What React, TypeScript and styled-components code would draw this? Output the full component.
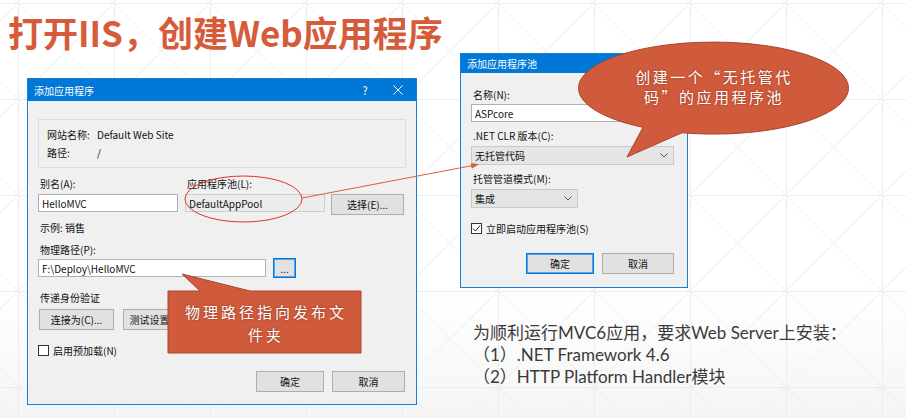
import styled, { createGlobalStyle } from "styled-components";

const GlobalStyle = createGlobalStyle`
  html, body {
    margin: 0;
    padding: 0;
  }
  body {
    background: #ffffff;
    font-family: "Noto Sans CJK SC", sans-serif;
  }
`;

const Slide = styled.div`
  position: relative;
  width: 906px;
  height: 418px;
  overflow: hidden;
  background: linear-gradient(to bottom, #ffffff 0, #ffffff 290px, #f5f5f5 418px);
`;

const Backdrop = styled.svg`
  position: absolute;
  left: 0;
  top: 0;
  z-index: 0;
`;

const Overlay = styled.svg`
  position: absolute;
  left: 0;
  top: 0;
  z-index: 2;
  pointer-events: none;
`;

const Content = styled.div`
  position: relative;
  z-index: 1;
`;

const Heading = styled.h1`
  margin: 0;
  height: 53px;
  box-sizing: border-box;
  padding: 11px 0 0 8px;
  font-family: "Noto Sans CJK SC", sans-serif;
  font-size: 35px;
  font-weight: 700;
  line-height: 42px;
  color: #d65b3b;
  white-space: nowrap;
`;

const Row = styled.div`
  display: flex;
  align-items: flex-start;
`;

const LeftCol = styled.div`
  padding: 25px 0 0 27px;
`;

const RightCol = styled.div`
  margin-left: 43px;
`;

const Dialog = styled.div<{ $w: number }>`
  width: ${(p) => p.$w}px;
  box-sizing: border-box;
  border: 1px solid #1a7fd4;
  background: #f0f0f0;
  font-family: "Noto Sans CJK SC", sans-serif;
  font-size: 10px;
  color: #111;
`;

const TitleBar = styled.div<{ $h: number }>`
  height: ${(p) => p.$h}px;
  display: flex;
  align-items: center;
  justify-content: space-between;
  padding-left: 6px;
  background: #0078d7;
  color: #ffffff;
  font-size: 10px;
`;

const TitleControls = styled.div`
  display: flex;
  align-items: center;
  gap: 13px;
  padding-right: 8px;
`;

const TitleButton = styled.span`
  width: 20px;
  display: flex;
  justify-content: center;
  font-size: 11px;
`;

const Body = styled.div<{ $pad: string }>`
  padding: ${(p) => p.$pad};
`;

const InfoBox = styled.div`
  height: 49px;
  box-sizing: border-box;
  border: 1px solid #dcdcdc;
  padding: 5px 8px 0;
`;

const InfoRow = styled.div`
  height: 18px;
  display: flex;
  align-items: center;
`;

const InfoKey = styled.span`
  width: 50px;
`;

const Label = styled.div<{ $mt?: number; $mb?: number }>`
  height: 14px;
  line-height: 14px;
  padding-left: 2px;
  margin-top: ${(p) => p.$mt ?? 0}px;
  margin-bottom: ${(p) => p.$mb ?? 0}px;
  white-space: nowrap;
`;

const FieldRow = styled.div`
  display: flex;
  margin-top: 9px;
`;

const Field = styled.div<{ $mr: number }>`
  margin-right: ${(p) => p.$mr}px;
`;

const TextBox = styled.div<{ $w: number; $disabled?: boolean }>`
  width: ${(p) => p.$w}px;
  height: 18px;
  box-sizing: border-box;
  display: flex;
  align-items: center;
  padding-left: 3px;
  background: ${(p) => (p.$disabled ? "#ececec" : "#ffffff")};
  border: 1px solid ${(p) => (p.$disabled ? "#cdcdcd" : "#b0b0b0")};
  white-space: nowrap;
`;

const Button = styled.div<{ $w: number; $h?: number; $primary?: boolean; $mt?: number }>`
  width: ${(p) => p.$w}px;
  height: ${(p) => p.$h ?? 21}px;
  margin-top: ${(p) => p.$mt ?? 0}px;
  box-sizing: border-box;
  display: flex;
  align-items: center;
  justify-content: center;
  background: #e1e1e1;
  border: 1px solid ${(p) => (p.$primary ? "#0078d7" : "#adadad")};
  box-shadow: ${(p) => (p.$primary ? "inset 0 0 0 1px #5aa3e6" : "none")};
  white-space: nowrap;
  flex-shrink: 0;
`;

const PathRow = styled.div`
  display: flex;
  align-items: center;
  gap: 7px;
`;

const ButtonRow = styled.div<{ $mt?: number; $end?: boolean; $gap: number; $pr?: number }>`
  display: flex;
  justify-content: ${(p) => (p.$end ? "flex-end" : "flex-start")};
  gap: ${(p) => p.$gap}px;
  margin-top: ${(p) => p.$mt ?? 0}px;
  padding-left: ${(p) => (p.$end ? 0 : 1)}px;
  padding-right: ${(p) => p.$pr ?? 0}px;
`;

const CheckRow = styled.div<{ $mt: number }>`
  height: 14px;
  display: flex;
  align-items: center;
  gap: 4px;
  margin-top: ${(p) => p.$mt}px;
`;

const Box = styled.span`
  width: 11px;
  height: 11px;
  box-sizing: border-box;
  border: 1px solid #333333;
  background: #ffffff;
  display: flex;
  align-items: center;
  justify-content: center;
`;

const Combo = styled.div<{ $w: number }>`
  width: ${(p) => p.$w}px;
  height: 19px;
  box-sizing: border-box;
  display: flex;
  align-items: center;
  justify-content: space-between;
  padding: 0 5px 0 3px;
  background: #e5e5e5;
  border: 1px solid #c9c9c9;
`;

const Notes = styled.div`
  margin-top: 34px;
  padding-left: 13px;
  font-family: Lato, "Noto Sans CJK SC", sans-serif;
  font-size: 17px;
  line-height: 22px;
  color: #3a3a3a;
  white-space: nowrap;
`;

const CalloutText = styled.div<{ $lh: number; $ls: number }>`
  position: absolute;
  z-index: 3;
  text-align: center;
  font-family: "Noto Sans CJK SC", sans-serif;
  font-size: 15px;
  line-height: ${(p) => p.$lh}px;
  letter-spacing: ${(p) => p.$ls}px;
  color: #ffffff;
  text-shadow: 0 0 2px rgba(110, 35, 15, 0.7);
  white-space: nowrap;
`;

const Chevron = () => (
  <svg width="8" height="5" viewBox="0 0 8 5">
    <path d="M0.5 0.5 L4 4 L7.5 0.5" fill="none" stroke="#555" strokeWidth="1" />
  </svg>
);

const CloseIcon = () => (
  <svg width="10" height="10" viewBox="0 0 10 10">
    <path d="M0.5 0.5 L9.5 9.5 M9.5 0.5 L0.5 9.5" stroke="#fff" strokeWidth="1" />
  </svg>
);

const Check = () => (
  <svg width="9" height="9" viewBox="0 0 9 9">
    <path d="M1 4.5 L3.5 7 L8 1.5" fill="none" stroke="#222" strokeWidth="1" />
  </svg>
);

const AddAppDialog = () => (
  <Dialog $w={390}>
    <TitleBar $h={22}>
      <span>添加应用程序</span>
      <TitleControls>
        <TitleButton>?</TitleButton>
        <TitleButton>
          <CloseIcon />
        </TitleButton>
      </TitleControls>
    </TitleBar>
    <Body $pad="18px 10px 12px 10px">
      <InfoBox>
        <InfoRow>
          <InfoKey>网站名称:</InfoKey>
          <span>Default Web Site</span>
        </InfoRow>
        <InfoRow>
          <InfoKey>路径:</InfoKey>
          <span>/</span>
        </InfoRow>
      </InfoBox>
      <FieldRow>
        <Field $mr={7}>
          <Label $mb={3}>别名(A):</Label>
          <TextBox $w={140}>HelloMVC</TextBox>
        </Field>
        <Field $mr={6}>
          <Label $mb={3}>应用程序池(L):</Label>
          <TextBox $w={140} $disabled>
            DefaultAppPool
          </TextBox>
        </Field>
        <Button $w={73} $mt={17}>
          选择(E)...
        </Button>
      </FieldRow>
      <Label $mt={6}>示例: 销售</Label>
      <Label $mt={8} $mb={1}>
        物理路径(P):
      </Label>
      <PathRow>
        <TextBox $w={228}>F:\Deploy\HelloMVC</TextBox>
        <Button $w={23} $h={20} $primary>
          ...
        </Button>
      </PathRow>
      <Label $mt={13} $mb={4}>
        传递身份验证
      </Label>
      <ButtonRow $gap={9}>
        <Button $w={75}>连接为(C)...</Button>
        <Button $w={75}>测试设置(G)...</Button>
      </ButtonRow>
      <CheckRow $mt={13}>
        <Box />
        <span>启用预加载(N)</span>
      </CheckRow>
      <ButtonRow $mt={14} $gap={8} $end $pr={1}>
        <Button $w={68}>确定</Button>
        <Button $w={73}>取消</Button>
      </ButtonRow>
    </Body>
  </Dialog>
);

const AddPoolDialog = () => (
  <Dialog $w={228}>
    <TitleBar $h={19}>
      <span>添加应用程序池</span>
    </TitleBar>
    <Body $pad="15px 13px 13px 10px">
      <Label $mb={2}>名称(N):</Label>
      <TextBox $w={204}>ASPcore</TextBox>
      <Label $mt={7} $mb={3}>
        .NET CLR 版本(C):
      </Label>
      <Combo $w={203}>
        <span>无托管代码</span>
        <Chevron />
      </Combo>
      <Label $mt={7} $mb={3}>
        托管管道模式(M):
      </Label>
      <Combo $w={107}>
        <span>集成</span>
        <Chevron />
      </Combo>
      <CheckRow $mt={13}>
        <Box>
          <Check />
        </Box>
        <span>立即启动应用程序池(S)</span>
      </CheckRow>
      <ButtonRow $mt={18} $gap={8} $end>
        <Button $w={68} $primary>
          确定
        </Button>
        <Button $w={72}>取消</Button>
      </ButtonRow>
    </Body>
  </Dialog>
);

export default function App() {
  return (
    <>
      <GlobalStyle />
      <Slide>
        <Backdrop width="906" height="418" viewBox="0 0 906 418">
          <defs>
            <pattern id="grid" x="18" y="3" width="96" height="96" patternUnits="userSpaceOnUse">
              <path
                d="M0 0.5 H96 M0.5 0 V96 M0 0 L96 96 M96 0 L0 96"
                fill="none"
                stroke="#ededed"
                strokeWidth="1"
              />
            </pattern>
          </defs>
          <rect width="906" height="418" fill="url(#grid)" />
        </Backdrop>

        <Content>
          <Heading>打开IIS，创建Web应用程序</Heading>
          <Row>
            <LeftCol>
              <AddAppDialog />
            </LeftCol>
            <RightCol>
              <AddPoolDialog />
              <Notes>
                为顺利运行MVC6应用，要求Web Server上安装：
                <br />
                （1）.NET Framework 4.6
                <br />
                （2）HTTP Platform Handler模块
              </Notes>
            </RightCol>
          </Row>
        </Content>

        <Overlay width="906" height="418" viewBox="0 0 906 418">
          <defs>
            <marker id="head" markerWidth="8" markerHeight="6" refX="7" refY="3" orient="auto">
              <path d="M0 0 L8 3 L0 6 Z" fill="#d8603f" />
            </marker>
          </defs>
          <ellipse cx="243.5" cy="199" rx="58.5" ry="23" fill="none" stroke="#e5322d" strokeWidth="1" />
          <line x1="302" y1="198" x2="478" y2="164.5" stroke="#d8603f" strokeWidth="1" markerEnd="url(#head)" />
          <path
            d="M168 291 L200 291 L182 274 L250 291 L361 291 L361 353 L168 353 Z"
            fill="#cf5a3c"
            stroke="#a9452e"
            strokeWidth="1"
          />
          <path
            d="M643 127.3 L627 157 L682 132.8 A135 46 0 1 0 643 127.3 Z"
            fill="#cf5a3c"
            stroke="#a9452e"
            strokeWidth="1"
          />
        </Overlay>

        <CalloutText $lh={23} $ls={3} style={{ left: 168, top: 300, width: 196 }}>
          物理路径指向发布文
          <br />
          件夹
        </CalloutText>
        <CalloutText $lh={20} $ls={2.5} style={{ left: 578, top: 67, width: 272 }}>
          创建一个“无托管代
          <br />
          码”的应用程序池
        </CalloutText>
      </Slide>
    </>
  );
}
